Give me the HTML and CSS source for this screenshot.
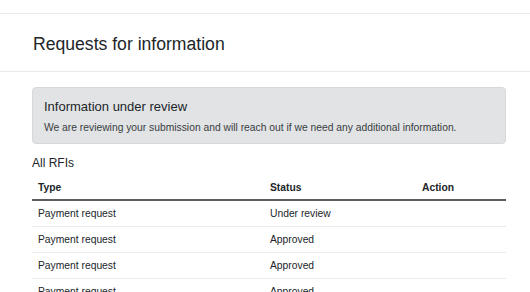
FILE: index.html
```html
<!DOCTYPE html>
<html lang="en">
<head>
    <meta charset="UTF-8">
    <meta name="viewport" content="width=device-width, initial-scale=1.0">
    <title>Requests for information</title>
    <link rel="stylesheet" href="styles.css">
</head>
<body>
    <div class="topbar"></div>
    <header class="page-header">
        <h1>Requests for information</h1>
    </header>
    <main class="content">
        <div class="alert">
            <h4>Information under review</h4>
            <p>We are reviewing your submission and will reach out if we need any additional information.</p>
        </div>

        <h2>All RFIs</h2>
        <table class="rfi-table">
            <thead>
                <tr>
                    <th class="col-type">Type</th>
                    <th class="col-status">Status</th>
                    <th>Action</th>
                </tr>
            </thead>
            <tbody>
                <tr>
                    <td>Payment request</td>
                    <td>Under review</td>
                    <td></td>
                </tr>
                <tr>
                    <td>Payment request</td>
                    <td>Approved</td>
                    <td></td>
                </tr>
                <tr>
                    <td>Payment request</td>
                    <td>Approved</td>
                    <td></td>
                </tr>
                <tr>
                    <td>Payment request</td>
                    <td>Approved</td>
                    <td></td>
                </tr>
            </tbody>
        </table>
    </main>
</body>
</html>
```

FILE: styles.css
```css
body {
    margin: 0;
    font-family: "Liberation Sans", Arial, sans-serif;
    color: #212529;
    background: #fff;
}
.topbar {
    height: 13px;
    border-bottom: 1px solid #e9e9ea;
}
.page-header {
    height: 58px;
    padding: 4px 33px 0;
    box-sizing: border-box;
    border-bottom: 1px solid #e9e9ea;
    display: flex;
    align-items: center;
}
.page-header h1 {
    margin: 0;
    font-size: 17.6px;
    font-weight: normal;
}
.content {
    padding: 15px 24px 0 32px;
}
.alert {
    background: #e2e3e5;
    border: 1px solid #d6d8db;
    border-radius: 4px;
    padding: 11px 11px 10px;
}
.alert h4 {
    margin: 0 0 8px;
    font-size: 13px;
    font-weight: normal;
}
.alert p {
    margin: 0;
    font-size: 10.3px;
    color: #383d41;
}
h2 {
    margin: 12px 0 6px;
    font-size: 12px;
    font-weight: normal;
}
.rfi-table {
    width: 100%;
    border-collapse: collapse;
    font-size: 10.3px;
}
.rfi-table th {
    text-align: left;
    font-weight: bold;
    padding: 6px 6px;
    border-bottom: 2px solid #5a5d61;
}
.rfi-table td {
    padding: 0 6px;
    height: 25px;
    border-bottom: 1px solid #e9ecef;
}
.col-type {
    width: 220px;
}
.col-status {
    width: 140px;
}
```
